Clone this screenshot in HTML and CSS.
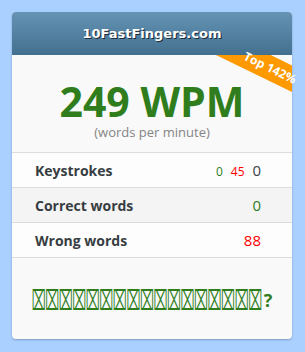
FILE: index.html
```html
<!DOCTYPE html>
<html>
<head>
<meta charset="utf-8">
<link rel="stylesheet" href="styles.css">
</head>
<body>
<div class="card">
  <div class="head">10FastFingers.com</div>
  <div class="body">
    <div class="ribbon-clip"><div class="band"></div></div>
    <div class="ribbon-text"><span>Top 142%</span></div>
    <div class="wpm">249 WPM</div>
    <div class="sub">(words per minute)</div>
    <div class="rows">
      <div class="row"><span class="lbl">Keystrokes</span><span class="val"><small class="g">0</small> <small class="r">45</small> <span class="d">0</span></span></div>
      <div class="row alt"><span class="lbl">Correct words</span><span class="val g">0</span></div>
      <div class="row"><span class="lbl">Wrong words</span><span class="val r">88</span></div>
    </div>
    <div class="foot"><span class="tofu">⌧⌧⌧⌧⌧⌧⌧⌧⌧⌧⌧⌧⌧⌧⌧⌧⌧</span>?</div>
  </div>
</div>
</body>
</html>
```
FILE: styles.css
```css
html, body { margin: 0; padding: 0; }
body {
  background: #a9d0ff;
  width: 305px;
  height: 352px;
  padding: 12px;
  box-sizing: border-box;
  font-family: "Open Sans", "Noto Sans", sans-serif;
  overflow: hidden;
}
.card {
  width: 280px;
  height: 327px;
  background: #f9f9f9;
  border-radius: 4px;
  box-shadow: 0 1px 2px rgba(0,0,0,0.25);
  position: relative;
  display: flex;
  flex-direction: column;
}
.head {
  height: 43px;
  border-radius: 4px 4px 0 0;
  background: linear-gradient(#6493b4, #44708f);
  color: #fff;
  font-family: "DejaVu Sans", sans-serif;
  font-weight: bold;
  font-size: 13px;
  display: flex;
  align-items: center;
  justify-content: center;
  text-shadow: 1px 1px 0 #1d2c38;
}
.body {
  position: relative;
  flex: 1;
  display: flex;
  flex-direction: column;
}
.ribbon-clip {
  position: absolute;
  top: 0; right: 0;
  width: 100px; height: 60px;
  overflow: hidden;
}
.band {
  position: absolute;
  left: -22px;
  top: 1px;
  width: 200px;
  height: 24px;
  transform: rotate(26deg);
  background: #ff9900;
}
.ribbon-text {
  position: absolute;
  top: 0; right: 0;
  width: 100px; height: 60px;
}
.ribbon-text span {
  position: absolute;
  left: 28px;
  top: 1px;
  width: 100px;
  height: 24px;
  transform: rotate(26deg);
  color: #fff;
  font-weight: bold;
  font-size: 12px;
  line-height: 24px;
  text-align: center;
}
.wpm {
  margin-top: 24px;
  text-align: center;
  color: #2f7d1c;
  font-weight: bold;
  font-size: 41px;
  line-height: 44px;
}
.sub {
  text-align: center;
  color: #858585;
  font-size: 13px;
  line-height: 18px;
}
.rows {
  margin-top: 11px;
  border-top: 1px solid #dcdcdc;
}
.row {
  height: 34px;
  border-bottom: 1px solid #dcdcdc;
  display: flex;
  align-items: center;
  justify-content: space-between;
  padding: 0 31px 0 23px;
  background: #fdfdfd;
}
.row.alt { background: #f4f4f4; }
.lbl {
  font-weight: bold;
  font-size: 14px;
  color: #373d42;
}
.val { font-size: 15px; color: #3b4248; }
.val small { font-size: 12px; margin-right: 4px; }
.g { color: #2f7d1c; }
.r { color: #ff0000; }
.d { color: #3b4248; }
.foot {
  margin-top: 30px;
  text-align: center;
  color: #2f7d1c;
  font-weight: bold;
  font-size: 18px;
  white-space: nowrap;
}
.tofu {
  display: inline-block;
  font-family: "DejaVu Sans", sans-serif;
  font-weight: normal;
  font-size: 12px;
  letter-spacing: -0.3px;
  transform: scaleY(2.3);
  transform-origin: 50% 60%;
  margin-right: 2px;
}
```
